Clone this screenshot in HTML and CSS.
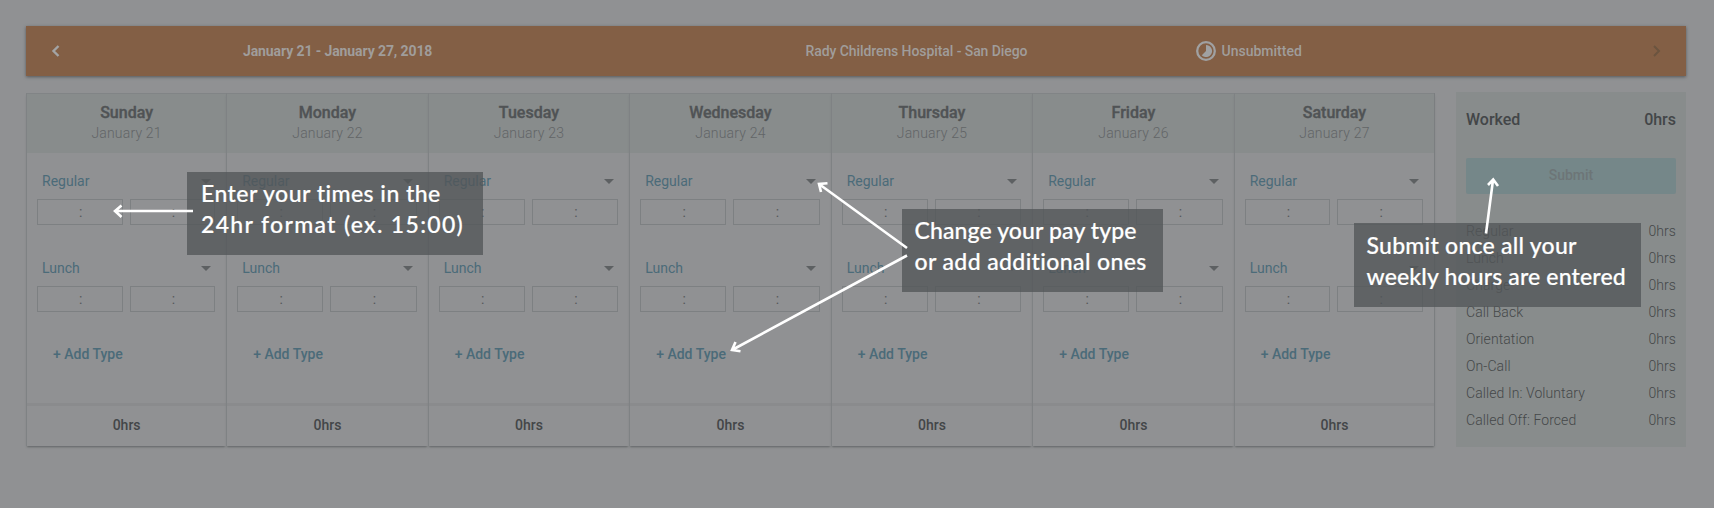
FILE: index.html
```html
<!DOCTYPE html>
<html lang="en">
<head>
<meta charset="utf-8">
<title>Timesheet</title>
<link rel="stylesheet" href="styles.css">
</head>
<body>
<header class="bar">
  <svg class="prev" width="10" height="12" viewBox="0 0 10 12"><path d="M7.500 1L2.500 6l5 5"/></svg>
  <strong class="range">January 21 - January 27, 2018</strong>
  <span class="place">Rady Childrens Hospital - San Diego</span>
  <span class="status">
    <svg width="22" height="22" viewBox="0 0 22 22"><circle cx="11" cy="11" r="8.800"/><path d="M11 5a6 6 0 1 1-4.200 10.200L11 11z"/></svg>
    <span>Unsubmitted</span>
  </span>
  <svg class="next" width="10" height="12" viewBox="0 0 10 12"><path d="M2 1l5 5-5 5"/></svg>
</header>
<main class="content">
  <section class="week" id="week"></section>
  <aside class="summary">
    <div class="worked"><span>Worked</span><span>0hrs</span></div>
    <button class="submit">Submit</button>
    <div class="totals" id="totals"></div>
  </aside>
</main>
<div class="callout times"><span class="t1">Enter your times in the</span><span class="t2">24hr format (ex. 15:00)</span></div>
<div class="callout pay"><span class="p1">Change your pay type</span><span class="p2">or add additional ones</span></div>
<div class="callout send"><span class="s1">Submit once all your</span><span class="s2">weekly hours are entered</span></div>
<svg class="arrows" width="1714" height="508" viewBox="0 0 1714 508">
  <path d="M193 211H115M121.500 205.500L115 211l6.500 6"/>
  <path d="M907 248L819 184M827.500 183.200L819 184l2 8"/>
  <path d="M907 255.500L732 350M735.500 342L732 350l8.500 1.300"/>
  <path d="M1486 233.500L1493 180M1488 185L1493.200 179.500 1498 186"/>
</svg>
<script src="script.js"></script>
</body>
</html>
```
FILE: styles.css
```css
* { box-sizing: border-box; }
body {
  margin: 0;
  height: 508px;
  padding: 26px 28px 0 26px;
  overflow: hidden;
  position: relative;
  background: #909193;
  font: 14px/20px Roboto, sans-serif;
  color: #55585a;
}
.bar {
  height: 50px;
  display: grid;
  grid-template-columns: 217px 562.5px 389px 457px auto;
  align-items: center;
  background: #835f45;
  color: #a09d9b;
  font-weight: 500;
  box-shadow: 0 1px 3px #55585a;
}
.bar path { fill: none; stroke: #a3a4a5; stroke-width: 2.4; }
.prev { margin: 0 0 1px 25px; }
.range { font-weight: 700; padding-bottom: 1px; letter-spacing: -.1px; }
.place { letter-spacing: -.08px; }
.bar .next path { stroke: #6b543f; stroke-width: 2; }
.status { display: flex; align-items: center; gap: 5px; }
.status span { padding-bottom: 1px; }
.status circle { fill: none; stroke: #a0a1a2; stroke-width: 2.300; }
.status path { fill: #a0a1a2; stroke: none; }
.content { width: 1660px; display: flex; justify-content: space-between; margin-top: 16px; }
.week { display: grid; grid-template-columns: 200.200px repeat(6, 201.500px); padding-top: 1px; }
.day {
  height: 353px;
  border-left: 1px solid #7f8284;
  box-shadow: 0 2px 2px -1px #606365;
  display: flex;
  flex-direction: column;
  background: #909193;
}
.day:last-child { border-right: 1px solid #7b7e80; }
.head { height: 60px; background: #888c8c; text-align: center; padding-top: 9px; border-top: 1px solid #818486; }
.head b { display: block; font-size: 16px; font-weight: 500; color: #505355; -webkit-text-stroke: .35px #505355; }
.head span { display: block; color: #626567; font-weight: 300; letter-spacing: .18px; }
.entries { flex: 1; padding: 18px 11px 0 10px; }
.entry { height: 87px; }
.entry + .add { margin-top: -1px; }
.type { display: flex; justify-content: space-between; align-items: center; padding: 0 4px 0 5px; color: #4b6b79; }
.type i { border: 5px solid transparent; border-top-color: #5d6062; border-bottom: 0; }
.fields { display: flex; gap: 7px; margin-top: 8px; }
.fields span { flex: 1; height: 26px; border: 1px solid #7d8082; text-align: center; line-height: 25px; padding-left: 2px; }
.add { color: #4b6b79; font-weight: 500; padding-left: 16px; }
.total { height: 43px; border-top: 3px solid #8a8b8d; text-align: center; font-weight: 500; line-height: 38px; color: #434648; }
.summary { width: 230px; height: 355px; padding: 18px 10px 0; background: #888c8c; }
.worked { display: flex; justify-content: space-between; font-size: 16px; font-weight: 500; color: #434648; }
.submit { display: block; width: 100%; height: 36px; margin: 28px 0 27px; border: 0; border-radius: 2px; background: #758789; color: #6d7577; font: 500 14px/34px Roboto, sans-serif; padding: 0 0 2px; }
.totals div { display: flex; justify-content: space-between; height: 27px; color: #454849; font-weight: 300; letter-spacing: .08px; }
.callout {
  position: absolute;
  height: 83px;
  padding: 6px 14px;
  background: rgba(82, 86, 88, .78);
  color: #fff;
  font: 500 23px/31px Lato, sans-serif;
  -webkit-text-stroke: .2px #fff;
  white-space: nowrap;
}
.callout span { display: block; }
.times { left: 187px; top: 172px; width: 296px; }
.pay { left: 902px; top: 209px; width: 261px; padding-left: 12.500px; }
.send { left: 1354px; top: 223px; width: 287px; height: 84px; padding: 7px 0 0 12.500px; }
.t1 { letter-spacing: .46px; }
.t2 { letter-spacing: 1.32px; }
.p1 { letter-spacing: .12px; }
.p2 { letter-spacing: .38px; }
.s1 { letter-spacing: .25px; }
.s2 { letter-spacing: .15px; }
.arrows { position: absolute; left: 0; top: 0; fill: none; stroke: #fff; stroke-width: 2.600; }
```
FILE: script.js
```js
const days = ['Sunday', 'Monday', 'Tuesday', 'Wednesday', 'Thursday', 'Friday', 'Saturday'];
const entry = name => `<div class="entry"><div class="type">${name}<i></i></div><div class="fields"><span>:</span><span>:</span></div></div>`;
document.getElementById('week').innerHTML = days.map((day, i) => `
  <article class="day">
    <div class="head"><b>${day}</b><span>January ${21 + i}</span></div>
    <div class="entries">${entry('Regular')}${entry('Lunch')}<div class="add">+ Add Type</div></div>
    <div class="total">0hrs</div>
  </article>`).join('');
const types = ['Regular', 'Lunch', 'Charge', 'Call Back', 'Orientation', 'On-Call', 'Called In: Voluntary', 'Called Off: Forced'];
document.getElementById('totals').innerHTML = types.map(t => `<div><span>${t}</span><span>0hrs</span></div>`).join('');
```
